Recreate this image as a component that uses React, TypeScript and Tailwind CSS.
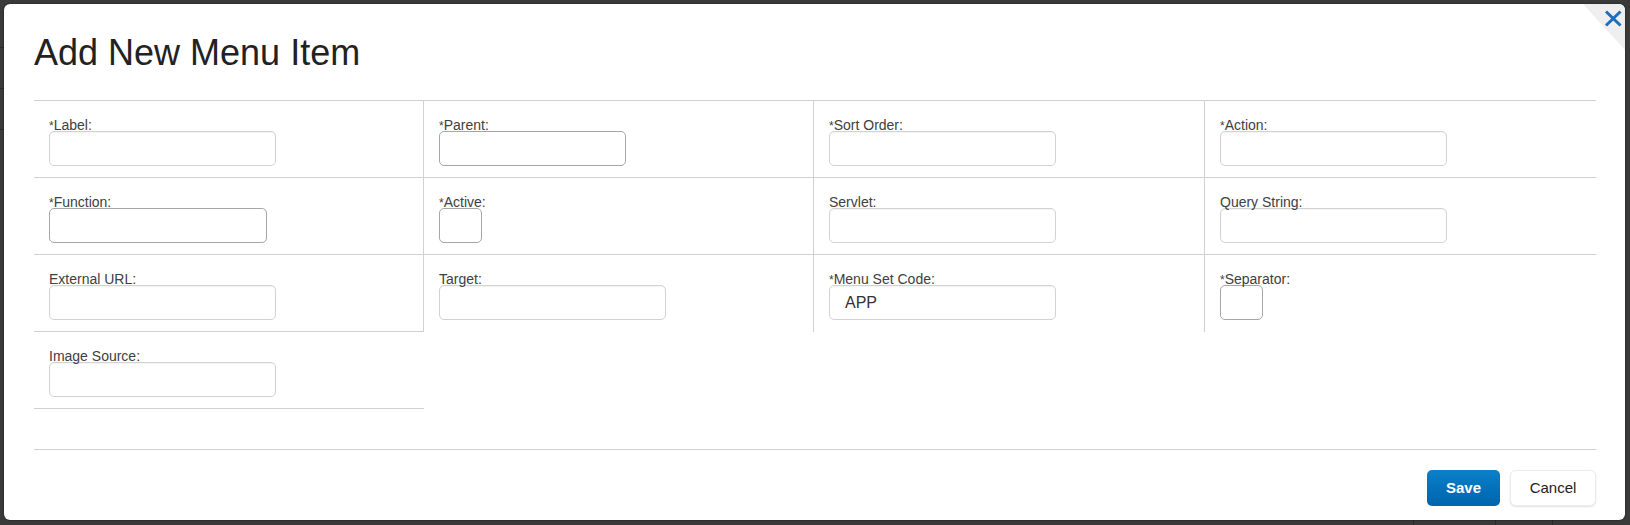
import React from "react";

type FieldProps = {
  label?: string;
  required?: boolean;
  w?: string;
  dark?: boolean;
  value?: string;
  cell: string;
};

function Cell({ label, required, w, dark, value, cell }: FieldProps) {
  return (
    <div className={`h-[77px] pl-[15px] pt-[18px] ${cell}`}>
      {label !== undefined && (
        <>
          <div className="h-[12px] leading-[12px] text-[14px] text-[#404040] whitespace-nowrap">
            {required && <span className="text-[12px]">*</span>}
            {label}
          </div>
          <div
            className={`h-[35px] ${w} rounded-[5px] border bg-white ${
              dark ? "border-[#a6a6a6]" : "border-[#d2d2d2] shadow-[inset_0_1px_1px_rgba(0,0,0,0.05)]"
            } flex items-center pl-[15px] text-[16px] text-[#333]`}
          >
            {value}
          </div>
        </>
      )}
    </div>
  );
}

export default function App() {
  const b = "border-[#d0d0d0]";
  return (
    <div className="relative w-[1630px] h-[525px] bg-[#3a3a3a] overflow-hidden p-[4px] font-['Liberation_Sans',Arial,sans-serif]">
      {/* background page hints */}
      <div className="absolute left-0 top-[47px] w-[6px] h-px bg-[#2a2a2a]" />
      <div className="absolute left-0 top-[88px] w-[6px] h-px bg-[#2a2a2a]" />
      <div className="absolute left-0 top-[129px] w-[6px] h-px bg-[#2a2a2a]" />
      <div className="absolute left-[1413px] top-[518px] w-px h-[7px] bg-[#2a2a2a]" />
      <div className="absolute left-[1495px] top-[518px] w-px h-[7px] bg-[#2a2a2a]" />
      <div className="absolute left-[1552px] top-[518px] w-px h-[7px] bg-[#2a2a2a]" />

      <div className="relative w-[1621px] h-[516px] bg-white rounded-[6px] overflow-hidden pl-[30px] pr-[29px] pt-[28px] flex flex-col shadow-[0_0_2px_rgba(0,0,0,0.6)]">
        {/* close corner */}
        <svg className="absolute top-0 right-0" width="42" height="46" viewBox="0 0 42 46">
          <polygon points="0,0 42,0 42,46" fill="#efefef" />
          <line x1="23" y1="7.5" x2="37.5" y2="21.5" stroke="#1b6fbd" strokeWidth="3" />
          <line x1="37.5" y1="7.5" x2="23" y2="21.5" stroke="#1b6fbd" strokeWidth="3" />
        </svg>

        <h1 className="text-[36px] leading-[41px] text-[#222] font-normal">Add New Menu Item</h1>

        <div className={`mt-[27px] w-[1562px] grid grid-cols-[390px_390px_391px_391px] border-t ${b}`}>
          <Cell cell={`border-b border-r ${b}`} label="Label:" required w="w-[227px]" />
          <Cell cell={`border-b border-r ${b}`} label="Parent:" required w="w-[187px]" dark />
          <Cell cell={`border-b border-r ${b}`} label="Sort Order:" required w="w-[227px]" />
          <Cell cell={`border-b ${b}`} label="Action:" required w="w-[227px]" />

          <Cell cell={`border-b border-r ${b}`} label="Function:" required w="w-[218px]" dark />
          <Cell cell={`border-b border-r ${b}`} label="Active:" required w="w-[43px]" dark />
          <Cell cell={`border-b border-r ${b}`} label="Servlet:" w="w-[227px]" />
          <Cell cell={`border-b ${b}`} label="Query String:" w="w-[227px]" />

          <Cell cell={`border-b border-r ${b}`} label="External URL:" w="w-[227px]" />
          <Cell cell={`border-r ${b}`} label="Target:" w="w-[227px]" />
          <Cell cell={`border-r ${b}`} label="Menu Set Code:" required w="w-[227px]" value="APP" />
          <Cell cell="" label="Separator:" required w="w-[43px]" dark />

          <Cell cell={`border-b ${b}`} label="Image Source:" w="w-[227px]" />
        </div>

        <div className={`mt-[40px] w-[1562px] border-t ${b} pt-[20px] flex justify-end gap-[10px]`}>
          <button className="w-[73px] h-[36px] rounded-[5px] bg-gradient-to-b from-[#0b80c8] to-[#0064ae] text-white text-[15px] font-bold">
            Save
          </button>
          <button className="w-[86px] h-[36px] rounded-[6px] bg-white border border-[#ececec] shadow-[0_1px_2px_rgba(0,0,0,0.12)] text-[#222] text-[15px]">
            Cancel
          </button>
        </div>
      </div>
    </div>
  );
}
